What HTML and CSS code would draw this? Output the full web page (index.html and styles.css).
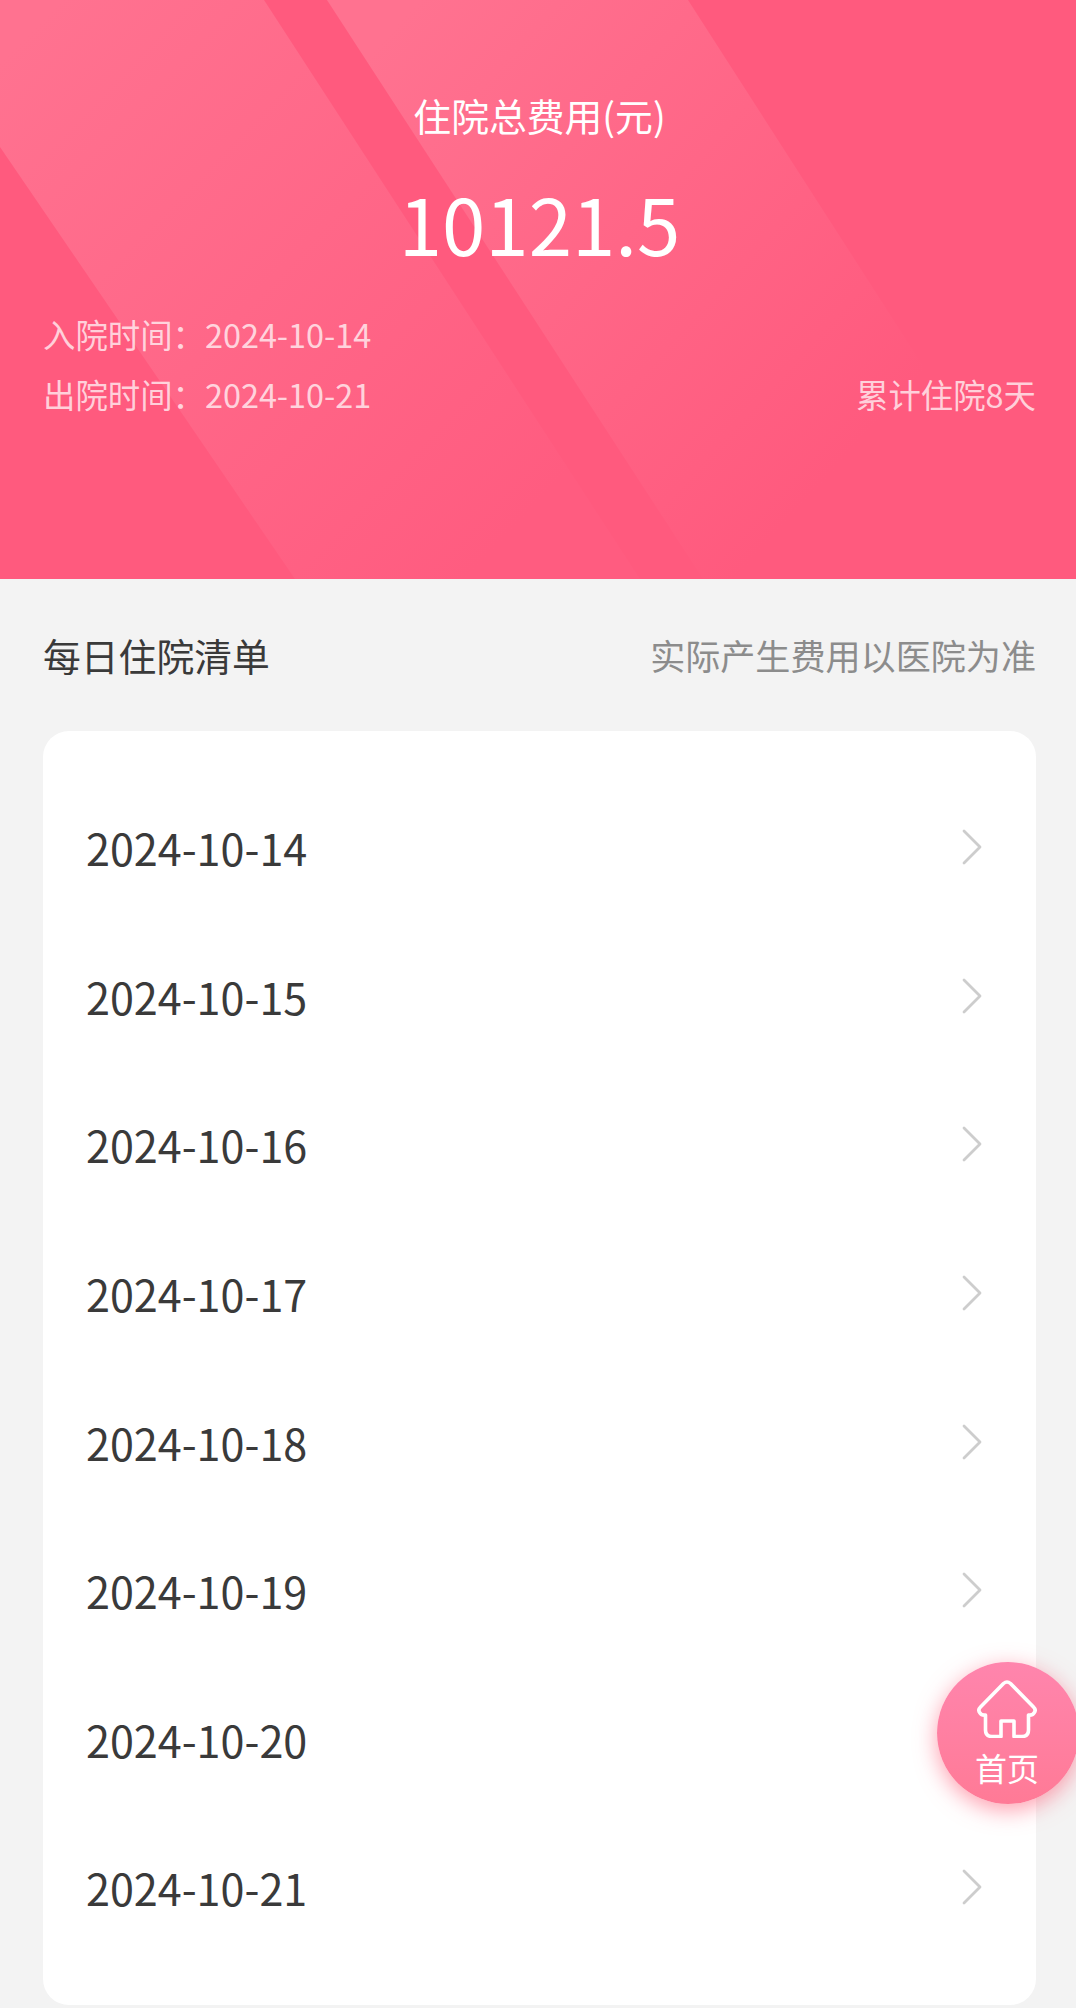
FILE: index.html
```html
<!DOCTYPE html>
<html lang="zh-CN">
<head>
<meta charset="utf-8">
<title>每日住院清单</title>
<link rel="stylesheet" href="styles.css">
</head>
<body>
<div class="page">
  <header class="hero">
    <svg class="hero-bands" viewBox="0 0 1076 579" preserveAspectRatio="none" aria-hidden="true">
      <defs>
        <linearGradient id="bandA" gradientUnits="userSpaceOnUse" x1="60" y1="0" x2="560" y2="480">
          <stop offset="0" stop-color="#ff7290"/>
          <stop offset="1" stop-color="#ff5c80"/>
        </linearGradient>
        <linearGradient id="bandB" gradientUnits="userSpaceOnUse" x1="420" y1="0" x2="880" y2="420">
          <stop offset="0" stop-color="#ff7290"/>
          <stop offset="1" stop-color="#ff5a7e"/>
        </linearGradient>
      </defs>
      <polygon points="0,0 264,0 640,579 295,579 0,147" fill="url(#bandA)"/>
      <polygon points="327,0 688,0 1060,579 703,579" fill="url(#bandB)"/>
    </svg>
    <h1 class="hero-title">住院总费用(元)</h1>
    <div class="hero-amount">10121.5</div>
    <div class="hero-info">
      <div>入院时间：2024-10-14</div>
      <div class="hero-row">
        <span>出院时间：2024-10-21</span>
        <span>累计住院8天</span>
      </div>
    </div>
  </header>

  <section class="section-head">
    <h2 class="section-title">每日住院清单</h2>
    <span class="section-note">实际产生费用以医院为准</span>
  </section>

  <ul class="day-list">
    <li class="day"><span class="day-date">2024-10-14</span><svg class="chevron" viewBox="0 0 20 36"><path d="M2 2 L18 18 L2 34"/></svg></li>
    <li class="day"><span class="day-date">2024-10-15</span><svg class="chevron" viewBox="0 0 20 36"><path d="M2 2 L18 18 L2 34"/></svg></li>
    <li class="day"><span class="day-date">2024-10-16</span><svg class="chevron" viewBox="0 0 20 36"><path d="M2 2 L18 18 L2 34"/></svg></li>
    <li class="day"><span class="day-date">2024-10-17</span><svg class="chevron" viewBox="0 0 20 36"><path d="M2 2 L18 18 L2 34"/></svg></li>
    <li class="day"><span class="day-date">2024-10-18</span><svg class="chevron" viewBox="0 0 20 36"><path d="M2 2 L18 18 L2 34"/></svg></li>
    <li class="day"><span class="day-date">2024-10-19</span><svg class="chevron" viewBox="0 0 20 36"><path d="M2 2 L18 18 L2 34"/></svg></li>
    <li class="day"><span class="day-date">2024-10-20</span><svg class="chevron" viewBox="0 0 20 36"><path d="M2 2 L18 18 L2 34"/></svg></li>
    <li class="day"><span class="day-date">2024-10-21</span><svg class="chevron" viewBox="0 0 20 36"><path d="M2 2 L18 18 L2 34"/></svg></li>
  </ul>

  <a class="fab">
    <svg class="fab-icon" viewBox="0 0 60 58">
      <path d="M26.500 3.500 Q30 0.500 33.500 3.500 L56.500 27 Q59.500 30 57 33 Q55.500 35.500 51.500 35 L51.500 50 Q51.500 56.500 45 56.500 L37 56.500 L37 41 L24 41 L24 56.500 L15 56.500 Q8.500 56.500 8.500 50 L8.500 35 Q4.500 35.500 3 33 Q0.500 30 3.500 27 Z"/>
    </svg>
    <span class="fab-label">首页</span>
  </a>
</div>
</body>
</html>
```

FILE: styles.css
```css
* { box-sizing: border-box; }

html, body {
  margin: 0;
  padding: 0;
  background: #f3f3f3;
}

body {
  font-family: "Noto Sans CJK SC", "Noto Sans", sans-serif;
  color: #333;
}

.page {
  position: relative;
  width: 1076px;
  height: 2008px;
  overflow: hidden;
}

.hero {
  position: relative;
  height: 579px;
  padding: 89px 40px 0 43px;
  background: #ff5a7e;
  color: #fff;
}

.hero-bands {
  position: absolute;
  inset: 0;
  width: 100%;
  height: 100%;
}

.hero-title,
.hero-amount,
.hero-info {
  position: relative;
}

.hero-title {
  margin: 0;
  font-size: 37.8px;
  font-weight: 400;
  line-height: 52px;
  text-align: center;
}

.hero-amount {
  margin-top: 31px;
  font-size: 78px;
  line-height: 100px;
  text-align: center;
}

.hero-info {
  margin-top: 32px;
  font-size: 32.4px;
  line-height: 60px;
  color: rgba(255, 255, 255, 0.72);
}

.hero-row {
  display: flex;
  justify-content: space-between;
}

.section-head {
  display: flex;
  justify-content: space-between;
  align-items: center;
  padding: 50px 40px 50px 43px;
}

.section-title {
  margin: 0;
  font-size: 37.8px;
  font-weight: 400;
  line-height: 52px;
  color: #3a3a3a;
}

.section-note {
  font-size: 35.1px;
  line-height: 52px;
  color: #8c8c8c;
}

.day-list {
  list-style: none;
  margin: 0 40px 0 43px;
  padding: 45px 0 40px;
  background: #fff;
  border-radius: 26px;
}

.day {
  display: flex;
  justify-content: space-between;
  align-items: center;
  height: 148.6px;
  padding: 0 54px 0 43px;
  font-size: 43.1px;
  color: #3a3a3a;
}

.day-date {
  margin-top: -6px;
}

.chevron {
  width: 20px;
  height: 36px;
  margin-top: -6px;
  fill: none;
  stroke: #cdcdcd;
  stroke-width: 2.8;
  stroke-linecap: round;
  stroke-linejoin: round;
}

.fab {
  position: absolute;
  left: 937px;
  top: 1662px;
  width: 142px;
  height: 142px;
  display: flex;
  flex-direction: column;
  align-items: center;
  border-radius: 50%;
  background: linear-gradient(180deg, #ff85ad 0%, #ff7a96 100%);
  box-shadow: 0 6px 22px rgba(255, 80, 110, 0.55);
  color: #fff;
}

.fab-icon {
  width: 60px;
  height: 58px;
  margin-top: 18px;
  margin-left: -2px;
  fill: none;
  stroke: #fff;
  stroke-width: 3.6;
  stroke-linejoin: round;
}

.fab-label {
  font-size: 32px;
  line-height: 46px;
  margin-top: 6px;
  margin-left: -2px;
}
```
